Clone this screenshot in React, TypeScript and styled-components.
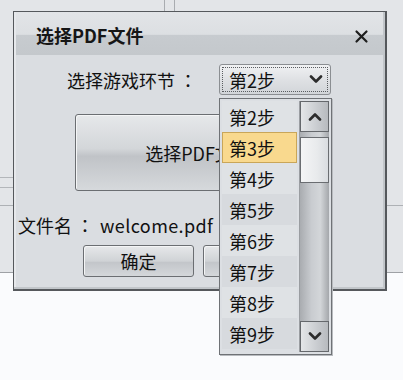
import styled, { createGlobalStyle } from 'styled-components'

const GlobalStyle = createGlobalStyle`
  html, body {
    margin: 0;
    padding: 0;
    background: #fafbfd;
  }
  body {
    font-family: "Noto Sans CJK SC", "Noto Sans", sans-serif;
    color: #111;
  }
`

const Page = styled.div`
  position: relative;
  width: 403px;
  height: 380px;
  overflow: hidden;
`

// the app that sits behind the dialog
const Backdrop = styled.div`
  height: 272px;
  background-color: #e3e5e8;
  border-bottom: 1px solid #9ea1a5;
  background-image:
    linear-gradient(#a9acb0, #a9acb0),
    linear-gradient(#a9acb0, #a9acb0),
    linear-gradient(#b3b6ba, #b3b6ba),
    linear-gradient(#b3b6ba, #b3b6ba),
    linear-gradient(#aeb1b5, #aeb1b5),
    linear-gradient(#aeb1b5, #aeb1b5);
  background-size: 1px 12px, 1px 12px, 14px 1px, 14px 1px, 14px 1px, 20px 1px;
  background-position: 164px 0, 174px 0, 0 177px, 0 187px, 0 205px, 386px 205px;
  background-repeat: no-repeat;
`

const Dialog = styled.div`
  position: absolute;
  left: 13px;
  top: 11px;
  width: 374px;
  height: 280px;
  box-sizing: border-box;
  border: 1px solid #55585c;
  border-right-width: 2px;
  border-bottom-width: 2px;
  background: #dadde1;
  box-shadow: inset -2px -2px 0 #c2c6ca, inset 2px 0 0 #e6e8eb;
  display: flex;
  flex-direction: column;
`

const TitleBar = styled.div`
  height: 43px;
  margin: 0 2px;
  display: flex;
  align-items: center;
  justify-content: space-between;
  padding: 0 14px 0 20px;
  background: linear-gradient(#e2e4e7 0%, #dcdfe2 52%, #c7cbcf 54%, #c4c8cc 100%);
`

const Title = styled.span`
  font-size: 18px;
  font-weight: 700;
  color: #161616;
  padding-top: 2px;
`

const Close = styled.svg`
  width: 15px;
  height: 15px;
  margin-top: 5px;
`

const Body = styled.div`
  display: flex;
  flex-direction: column;
  padding: 9px 0 0 0;
`

const PickRow = styled.div`
  display: flex;
  align-items: center;
  padding-left: 53px;
  height: 31px;
`

const Label = styled.span`
  font-size: 18px;
  width: 152px;
  white-space: pre;
`

// full-width colon drawn centred, as the Traditional face does
const Colon = styled.span`
  font-family: "Noto Sans CJK TC", "Noto Sans CJK SC", sans-serif;
`

const Combo = styled.div`
  width: 112px;
  height: 31px;
  box-sizing: border-box;
  border: 1px solid #8b8e92;
  border-radius: 3px;
  background: linear-gradient(#f0f1f3, #dfe1e4 50%, #d2d5d9);
  padding: 2px;
`

const ComboInner = styled.div`
  height: 100%;
  box-sizing: border-box;
  border: 1px dotted #5a5d60;
  display: flex;
  align-items: center;
  justify-content: space-between;
  padding: 0 4px 0 6px;
  font-size: 18px;
`

const BigButton = styled.div`
  margin: 19px 0 0 61px;
  width: 240px;
  height: 77px;
  box-sizing: border-box;
  border: 1px solid #6b6e72;
  border-radius: 3px;
  background: linear-gradient(#e6e8ea, #d3d6d9 45%, #c0c3c7 55%, #d6d9dc);
  box-shadow: inset 1px 1px 0 #f4f5f6;
  display: flex;
  align-items: center;
  justify-content: center;
  font-size: 18px;
  padding-left: 6px;
`

const FileLine = styled.div`
  margin: 22px 0 0 4px;
  font-size: 18px;
  height: 24px;
  line-height: 24px;
  white-space: pre;
`

const FileName = styled.span`
  padding-left: 6px;
  letter-spacing: 0.4px;
`

const ButtonRow = styled.div`
  display: flex;
  gap: 9px;
  margin: 8px 0 0 69px;
`

const Button = styled.div`
  width: 111px;
  height: 32px;
  box-sizing: border-box;
  border: 1px solid #6b6e72;
  border-radius: 3px;
  background: linear-gradient(#e6e8ea, #d0d3d6 50%, #c3c6ca 55%, #d4d7da);
  box-shadow: inset 1px 1px 0 #f4f5f6;
  display: flex;
  align-items: center;
  justify-content: center;
  font-size: 18px;
`

const DropList = styled.div`
  position: absolute;
  left: 219px;
  top: 98px;
  width: 113px;
  height: 257px;
  box-sizing: border-box;
  border: 1px solid #6f7276;
  background: #dcdfe3;
  display: flex;
  padding: 2px;
  box-shadow: 1px 1px 0 #b8bbbf;
`

const Items = styled.div`
  flex: 1;
  display: flex;
  flex-direction: column;
`

const Item = styled.div<{ $active?: boolean; $odd?: boolean }>`
  height: 31px;
  box-sizing: border-box;
  display: flex;
  align-items: center;
  padding-left: 6px;
  margin-right: 2px;
  font-size: 18px;
  background: ${p => (p.$active ? '#f9d98e' : p.$odd ? '#d7dade' : '#dfe2e5')};
  border: 1px solid ${p => (p.$active ? '#c9a659' : 'transparent')};
`

const ScrollBar = styled.div`
  width: 29px;
  display: flex;
  flex-direction: column;
  background: linear-gradient(90deg, #a9acb0, #c9ccd0 40%, #d3d6d9 70%, #a4a7ab);
  border-left: 1px solid #9a9da1;
`

const ScrollButton = styled.div`
  height: 31px;
  box-sizing: border-box;
  border: 1px solid #65686c;
  background: linear-gradient(90deg, #e4e6e8, #c9ccd0 60%, #b7babe);
  display: flex;
  align-items: center;
  justify-content: center;
`

const Thumb = styled.div`
  height: 46px;
  margin-top: 5px;
  box-sizing: border-box;
  border: 1px solid #6a6d71;
  background: linear-gradient(90deg, #f4f5f6, #e8eaec 60%, #d9dce0);
`

const Track = styled.div`
  flex: 1;
`

const Chevron = ({ up }: { up?: boolean }) => (
  <svg width="14" height="9" viewBox="0 0 14 9">
    <polyline
      points={up ? '2,7.5 7,2.5 12,7.5' : '2,1.5 7,6.5 12,1.5'}
      fill="none"
      stroke="#2c2c2c"
      strokeWidth="2.6"
      strokeLinecap="round"
      strokeLinejoin="round"
    />
  </svg>
)

const steps = [2, 3, 4, 5, 6, 7, 8, 9]

export default function App() {
  return (
    <>
      <GlobalStyle />
      <Page>
        <Backdrop />
        <Dialog>
          <TitleBar>
            <Title>选择PDF文件</Title>
            <Close viewBox="0 0 15 15">
              <path d="M2.5 2.5 L12.5 12.5 M12.5 2.5 L2.5 12.5" stroke="#1e1e1e" strokeWidth="2.2" strokeLinecap="round" />
            </Close>
          </TitleBar>
          <Body>
            <PickRow>
              <Label>
                选择游戏环节 <Colon>：</Colon>
              </Label>
              <Combo>
                <ComboInner>
                  <span>第2步</span>
                  <Chevron />
                </ComboInner>
              </Combo>
            </PickRow>
            <BigButton>选择PDF文件</BigButton>
            <FileLine>
              文件名 <Colon>：</Colon>
              <FileName>welcome.pdf</FileName>
            </FileLine>
            <ButtonRow>
              <Button>确定</Button>
              <Button>取消</Button>
            </ButtonRow>
          </Body>
        </Dialog>
        <DropList>
          <Items>
            {steps.map((n, i) => (
              <Item key={n} $active={n === 3} $odd={i % 2 === 1}>
                第{n}步
              </Item>
            ))}
          </Items>
          <ScrollBar>
            <ScrollButton>
              <Chevron up />
            </ScrollButton>
            <Thumb />
            <Track />
            <ScrollButton>
              <Chevron />
            </ScrollButton>
          </ScrollBar>
        </DropList>
      </Page>
    </>
  )
}
